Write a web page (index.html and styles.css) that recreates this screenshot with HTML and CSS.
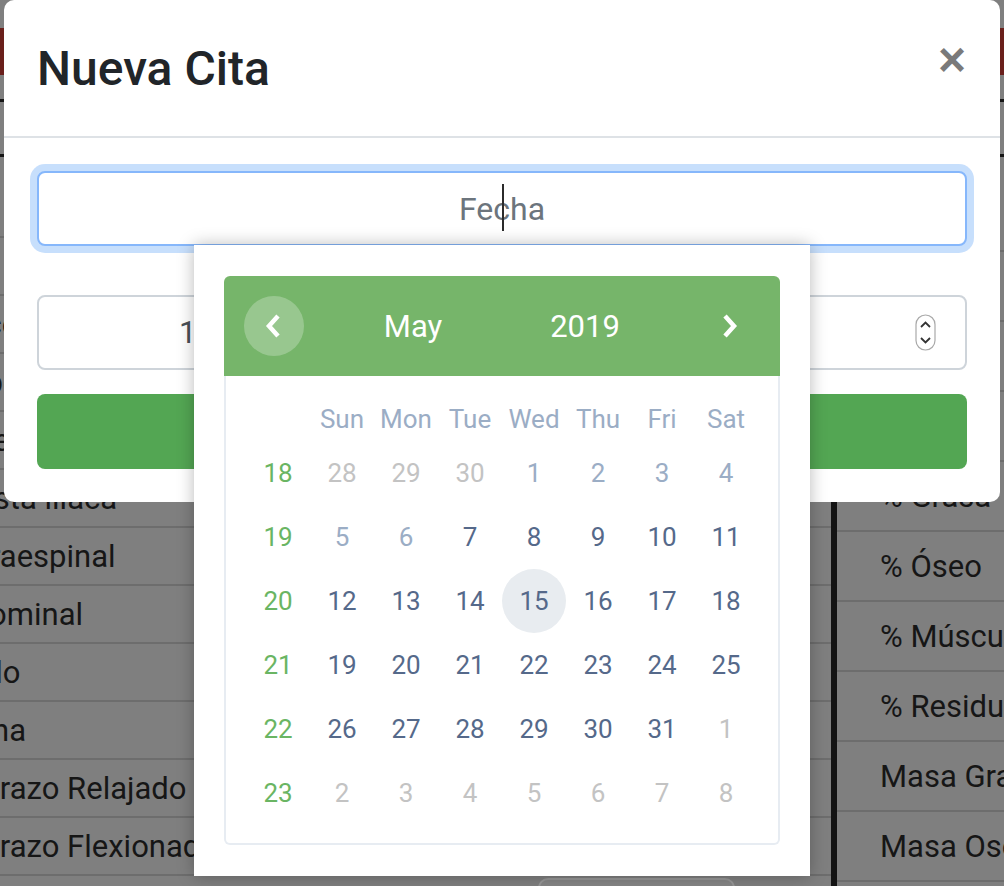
FILE: index.html
```html
<!DOCTYPE html>
<html lang="es">
<head>
<meta charset="utf-8">
<title>Nueva Cita</title>
<link rel="stylesheet" href="styles.css">
</head>
<body>
  <div class="page">
    <div class="page-top"></div>
    <div class="navbar"></div>
    <div class="subhead">
      <div class="rule"></div>
      <div class="subhead-gap"></div>
      <div class="rule"></div>
    </div>
    <div class="tables">
      <div class="tleft">
        <div class="lrow"></div>
        <div class="lrow"></div>
        <div class="lrow">Tríceps</div>
        <div class="lrow">Subescapular</div>
        <div class="lrow">Bíceps</div>
        <div class="lrow ind-3">Cresta iliaca</div>
        <div class="lrow ind-13">Supraespinal</div>
        <div class="lrow ind-16">Abdominal</div>
        <div class="lrow ind-15">Muslo</div>
        <div class="lrow ind-12">Pierna</div>
        <div class="lrow">P. Brazo Relajado</div>
        <div class="lrow">P. Brazo Flexionado</div>
        <div class="bg-btn"></div>
      </div>
      <div class="divider"></div>
      <div class="tright">
        <div class="rrow">Edad</div>
        <div class="rrow">Peso</div>
        <div class="rrow">Talla</div>
        <div class="rrow">IMC</div>
        <div class="rrow">% Grasa</div>
        <div class="rrow">% Óseo</div>
        <div class="rrow">% Músculo</div>
        <div class="rrow">% Residual</div>
        <div class="rrow">Masa Grasa</div>
        <div class="rrow">Masa Osea</div>
      </div>
    </div>
  </div>

  <div class="modal">
    <div class="modal-header">
      <h4 class="modal-title">Nueva Cita</h4>
      <span class="close">×</span>
    </div>
    <div class="modal-body">
      <div class="date-field">
        <div class="input input-focus">
          <span class="placeholder">Fecha</span>
          <span class="caret"></span>
        </div>
        <div class="datepicker">
          <div class="cal">
            <div class="cal-head">
              <div class="cal-prev">
                <svg width="16" height="24" viewBox="0 0 16 24"><path d="M13 2 L4 12 L13 22" fill="none" stroke="#fff" stroke-width="4.5"/></svg>
              </div>
              <div class="cal-month">May</div>
              <div class="cal-year">2019</div>
              <div class="cal-next">
                <svg width="16" height="24" viewBox="0 0 16 24"><path d="M3 2 L12 12 L3 22" fill="none" stroke="#fff" stroke-width="4.5"/></svg>
              </div>
            </div>
            <div class="cal-body">
              <div class="cal-grid">
                <div class="dn"></div><div class="dn">Sun</div><div class="dn">Mon</div><div class="dn">Tue</div><div class="dn">Wed</div><div class="dn">Thu</div><div class="dn">Fri</div><div class="dn">Sat</div>

                <div class="wk">18</div><div class="d other">28</div><div class="d other">29</div><div class="d other">30</div><div class="d dis">1</div><div class="d dis">2</div><div class="d dis">3</div><div class="d dis">4</div>

                <div class="wk">19</div><div class="d dis">5</div><div class="d dis">6</div><div class="d">7</div><div class="d">8</div><div class="d">9</div><div class="d">10</div><div class="d">11</div>

                <div class="wk">20</div><div class="d">12</div><div class="d">13</div><div class="d">14</div><div class="d sel">15</div><div class="d">16</div><div class="d">17</div><div class="d">18</div>

                <div class="wk">21</div><div class="d">19</div><div class="d">20</div><div class="d">21</div><div class="d">22</div><div class="d">23</div><div class="d">24</div><div class="d">25</div>

                <div class="wk">22</div><div class="d">26</div><div class="d">27</div><div class="d">28</div><div class="d">29</div><div class="d">30</div><div class="d">31</div><div class="d other">1</div>

                <div class="wk">23</div><div class="d other">2</div><div class="d other">3</div><div class="d other">4</div><div class="d other">5</div><div class="d other">6</div><div class="d other">7</div><div class="d other">8</div>
              </div>
            </div>
          </div>
        </div>
      </div>
      <div class="input select">
        <span class="select-value">10:00</span>
        <svg class="spinner" width="21" height="37" viewBox="0 0 21 37">
          <rect x="1" y="1" width="19" height="35" rx="9.5" fill="#fff" stroke="#a9a9a9" stroke-width="1.2"/>
          <path d="M6 13 L10.5 8.5 L15 13" fill="none" stroke="#333" stroke-width="1.8"/>
          <path d="M6 24 L10.5 28.5 L15 24" fill="none" stroke="#333" stroke-width="1.8"/>
        </svg>
      </div>
      <div class="btn-success"></div>
    </div>
  </div>
</body>
</html>
```
FILE: styles.css
```css
* { box-sizing: border-box; }
html, body { margin: 0; padding: 0; }
body {
  width: 1004px;
  height: 886px;
  overflow: hidden;
  position: relative;
  background: #7f7f7f;
  font-family: Roboto, "Liberation Sans", sans-serif;
}

/* background page (dimmed by backdrop) */
.page-top { height: 28px; }
.navbar { height: 47px; background: #6a1f1b; }
.subhead { height: 105px; padding-top: 24px; }
.rule { height: 3px; background: #151515; }
.subhead-gap { height: 52px; }
.tables { display: flex; }
.tleft { width: 881px; margin-left: -50px; flex: none; }
.divider { width: 6px; background: #131313; flex: none; }
.tright { flex: 1; padding-top: 2px; }
.lrow {
  height: 58px;
  border-bottom: 2px solid #6d6d6d;
  display: flex;
  align-items: center;
  font-size: 31px;
  color: #161616;
  white-space: nowrap;
}
.lrow.ind-3 { text-indent: -3px; }
.lrow.ind-12 { text-indent: -12px; }
.lrow.ind-13 { text-indent: -13px; }
.lrow.ind-15 { text-indent: -15px; }
.lrow.ind-16 { text-indent: -16px; }
.rrow {
  height: 70px;
  border-bottom: 2px solid #6d6d6d;
  display: flex;
  align-items: center;
  padding-left: 43px;
  font-size: 31px;
  color: #161616;
  white-space: nowrap;
}
.bg-btn {
  margin: 2px 0 0 588px;
  width: 197px;
  height: 40px;
  border: 2px solid #979797;
  border-radius: 10px;
  background: #858585;
}

/* modal */
.modal {
  position: absolute;
  top: 0;
  left: 4px;
  width: 996px;
  background: #fff;
  border-radius: 10px;
}
.modal-header {
  display: flex;
  justify-content: space-between;
  align-items: flex-start;
  padding: 33px 33px 31px;
  border-bottom: 2px solid #dee2e6;
}
.modal-title {
  margin: 0;
  font-size: 48px;
  line-height: 72px;
  font-weight: 500;
  color: #212529;
}
.close {
  font-family: "Liberation Sans", Arial, sans-serif;
  font-weight: 700;
  font-size: 48px;
  line-height: 48px;
  color: #7a7a7a;
  margin-top: 3px;
  margin-right: 1px;
}
.modal-body { padding: 33px 33px 33px; }

.date-field { position: relative; }
.input {
  height: 75px;
  border: 2px solid #ced4da;
  border-radius: 8px;
  background: #fff;
  display: flex;
  align-items: center;
  font-size: 32px;
  color: #495057;
}
.input-focus {
  position: relative;
  justify-content: center;
  border-color: #86b7fb;
  box-shadow: 0 0 0 7px rgba(0, 110, 240, 0.22);
}
.placeholder { color: #6c757d; }
.caret {
  position: absolute;
  left: 463px;
  top: 11px;
  width: 2px;
  height: 47px;
  background: #2b2b2b;
}
.select {
  margin-top: 49px;
  justify-content: space-between;
  padding: 0 29px 0 140px;
  font-size: 31px;
}
.spinner { display: block; }
.btn-success {
  margin-top: 24px;
  height: 75px;
  border-radius: 8px;
  background: #53a653;
}

/* datepicker */
.datepicker {
  position: absolute;
  z-index: 5;
  top: calc(100% - 1px);
  left: 157px;
  width: 616px;
  height: 631px;
  background: #fff;
  box-shadow: 0 0 16px rgba(0, 0, 0, 0.28);
  padding: 31px 30px 0;
}
.cal-head {
  height: 100px;
  background: #76b56a;
  border-radius: 6px 6px 0 0;
  display: grid;
  grid-template-columns: 100px 178px 166px 1fr;
  align-items: center;
  color: #fff;
  font-size: 31px;
}
.cal-prev {
  justify-self: center;
  width: 60px;
  height: 60px;
  border-radius: 50%;
  background: rgba(255, 255, 255, 0.25);
  display: flex;
  align-items: center;
  justify-content: center;
  padding-right: 2px;
}
.cal-prev svg, .cal-next svg { display: block; }
.cal-month, .cal-year { text-align: center; }
.cal-next { justify-self: end; margin-right: 42px; }
.cal-body {
  height: 469px;
  border: 2px solid #e7ecf2;
  border-top: none;
  border-radius: 0 0 6px 6px;
  padding: 21px 0 0;
}
.cal-grid {
  display: grid;
  grid-template-columns: repeat(8, 64px);
  grid-template-rows: 44px repeat(6, 64px);
  justify-content: center;
  font-size: 26px;
}
.cal-grid > div {
  display: flex;
  align-items: center;
  justify-content: center;
}
.dn { color: #9badc5; }
.wk { color: #6ab563; }
.d { color: #55698a; }
.d.dis { color: #9badc5; }
.d.other { color: #c3c3c3; }
.d.sel { background: #e8ecf0; border-radius: 50%; }
```
